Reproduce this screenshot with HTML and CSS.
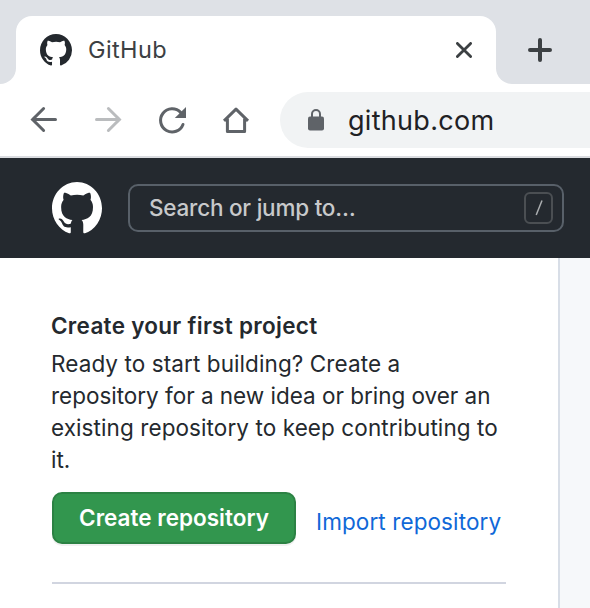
FILE: index.html
```html
<!DOCTYPE html>
<html lang="en">
<head>
<meta charset="utf-8">
<title>GitHub</title>
<link rel="stylesheet" href="styles.css">
</head>
<body>
<svg class="defs" width="0" height="0" aria-hidden="true">
  <symbol id="mark" viewBox="0 0 16 15.8" preserveAspectRatio="none"><path fill="currentColor" d="M8 0C3.58 0 0 3.58 0 8c0 3.54 2.29 6.53 5.47 7.59.4.07.55-.17.55-.38 0-.19-.01-.82-.01-1.49-2.01.37-2.53-.49-2.69-.94-.09-.23-.48-.94-.82-1.13-.28-.15-.68-.52-.01-.53.63-.01 1.08.58 1.23.82.72 1.21 1.87.87 2.33.66.07-.52.28-.87.51-1.07-1.78-.2-3.64-.89-3.64-3.95 0-.87.31-1.59.82-2.15-.08-.2-.36-1.02.08-2.12 0 0 .67-.21 2.2.82.64-.18 1.32-.27 2-.27s1.36.09 2 .27c1.53-1.04 2.2-.82 2.2-.82.44 1.1.16 1.92.08 2.12.51.56.82 1.27.82 2.15 0 3.07-1.87 3.75-3.65 3.95.29.25.54.73.54 1.48 0 1.07-.01 1.93-.01 2.2 0 .21.15.46.55.38A8.01 8.01 0 0 0 16 8c0-4.42-3.58-8-8-8z"/></symbol>
</svg>
<div class="tabstrip">
  <div class="tab-before"></div>
  <div class="tab">
    <svg class="favicon" width="32" height="32"><use href="#mark"/></svg>
    <span class="tab-title">GitHub</span>
    <svg class="close" width="16" height="16" viewBox="0 0 16 16"><path d="M1.4 1.4l13.2 13.2M14.6 1.4L1.4 14.6"/></svg>
  </div>
  <div class="tab-after">
    <svg width="24" height="24" viewBox="0 0 24 24"><path d="M12 2v20M2 12h20"/></svg>
  </div>
</div>
<div class="toolbar">
  <svg class="nav" width="32" height="32" viewBox="0 0 32 32"><path d="M27.5 15.5H4.5M15.6 4.5L4.6 15.5l11 11"/></svg>
  <svg class="nav forward" width="32" height="32" viewBox="0 0 32 32"><path d="M4.5 15.5H27.5M16.4 4.5l11 11-11 11"/></svg>
  <svg class="nav" width="32" height="32" viewBox="0 0 32 32"><path d="M24.6 8.4A11.6 11.6 0 1 0 27 20.5"/><path class="solid" d="M30 3v11H18.8z"/></svg>
  <svg class="nav" width="32" height="32" viewBox="0 0 32 32"><path class="home" d="M4 16.8L16 5.2l12 11.6M7.4 14.8v12.6h17.2V14.8"/></svg>
  <div class="omnibox">
    <svg class="lock" width="16" height="22" viewBox="0 0 16 22"><rect x="0" y="7.5" width="16" height="14" rx="2"/><path d="M4 8.5V5a4 4 0 0 1 8 0v3.5"/></svg>
    <span class="url">github.com</span>
  </div>
</div>
<header class="header">
  <svg class="logo" width="50" height="52"><use href="#mark"/></svg>
  <div class="search"><span class="placeholder">Search or jump to…</span>
    <span class="key"><svg width="10" height="18" viewBox="0 0 10 18"><path d="M8 1.5L2.2 16"/></svg></span>
  </div>
</header>
<main class="content">
  <aside class="sidebar">
    <h2 class="title">Create your first project</h2>
    <p class="intro"><span class="l1">Ready to start building? Create a</span><br><span class="l2">repository for a new idea or bring over an</span><br><span class="l3">existing repository to keep contributing to</span><br><span>it.</span></p>
    <div class="actions"><a class="button">Create repository</a><a class="link">Import repository</a></div>
    <hr class="rule">
  </aside>
</main>
</body>
</html>
```
FILE: styles.css
```css
* { box-sizing: border-box; }
body { margin: 0; width: 590px; height: 608px; overflow: hidden; display: flex; flex-direction: column; background: #fff; color: #24292e; font-family: Inter, "Liberation Sans", sans-serif; font-size: 22.5px; white-space: nowrap; }
.defs { position: absolute; }
svg { flex: none; display: block; }
.tabstrip { height: 84px; display: flex; flex: none; background: linear-gradient(#dee1e6 50px, #fff 50px); }
.tab-before { width: 16px; background: #dee1e6; border-bottom-right-radius: 16px; }
.tab { width: 480px; height: 68px; margin-top: 16px; display: flex; align-items: center; padding: 0 24px; background: #fff; border-radius: 16px 16px 0 0; color: #24292e; }
.tab-title { margin: 0 0 2px 16px; font-size: 23.5px; letter-spacing: .4px; color: #3c4043; }
.close { margin-left: auto; fill: none; stroke: #3c4043; stroke-width: 2.8; stroke-linecap: round; }
.tab-after { flex: 1; padding: 38px 0 0 32px; background: #dee1e6; border-bottom-left-radius: 16px; fill: none; stroke: #3c4043; stroke-width: 4; stroke-linecap: round; }
.toolbar { height: 74px; display: flex; flex: none; padding: 8px 0 8px 28px; border-bottom: 2px solid #dadce0; }
.nav { margin: 12px 32px 0 0; fill: none; stroke: #5f6368; stroke-width: 3; stroke-linecap: round; }
.forward { stroke: #babcbe; }
.solid { fill: #5f6368; stroke: none; }
.home { stroke-width: 3; stroke-linecap: butt; stroke-linejoin: round; }
.omnibox { flex: 1; height: 56px; margin-left: -4px; padding-left: 28px; display: flex; align-items: center; background: #f1f3f4; border-radius: 28px 0 0 28px; }
.lock { fill: #5f6368; }
.lock path { fill: none; stroke: #5f6368; stroke-width: 2; }
.url { margin-left: 24px; font-size: 27px; letter-spacing: .3px; color: #202124; }
.header { height: 100px; flex: none; display: flex; padding: 24px 26px 0 52px; background: #24292f; color: #fff; }
.search { flex: 1; height: 48px; margin: 2px 0 0 26px; padding: 0 9px 0 19px; display: flex; align-items: center; justify-content: space-between; border: 2px solid #586069; border-radius: 10px; color: #c8c9cb; }
.placeholder { margin-bottom: 2px; font-weight: 500; letter-spacing: -.22px; }
.key { width: 29px; height: 32px; display: flex; align-items: center; justify-content: center; border: 2px solid #4b4f53; border-radius: 6px; }
.key path { fill: none; stroke: #aaadaf; stroke-width: 1.5; }
.content { flex: 1; display: flex; background: #f6f8fa; }
.sidebar { width: 560px; padding: 52px 52px 0 52px; background: #fff; border-right: 2px solid #d8dee7; }
.title { margin: 0 0 6px -1px; font-size: 22.5px; line-height: 32px; font-weight: 600; letter-spacing: .29px; }
.intro { margin: 0 0 0 -1px; line-height: 32px; }
.l1 { letter-spacing: .09px; }
.l2 { letter-spacing: -.02px; }
.l3 { letter-spacing: .09px; }
.actions { display: flex; margin-top: 16px; height: 52px; }
.button { width: 244px; height: 52px; border: 2px solid #2c8244; border-radius: 10px; background: #32964e; box-shadow: 0 2px 0 #1b1f2310; color: #fff; font-weight: 600; line-height: 48px; text-align: center; }
.link { margin-left: 20px; color: #1068d8; line-height: 60px; letter-spacing: .1px; }
.rule { width: 454px; height: 2px; margin: 38px 0 0; border: 0; background: #d1d5e0; }
```
